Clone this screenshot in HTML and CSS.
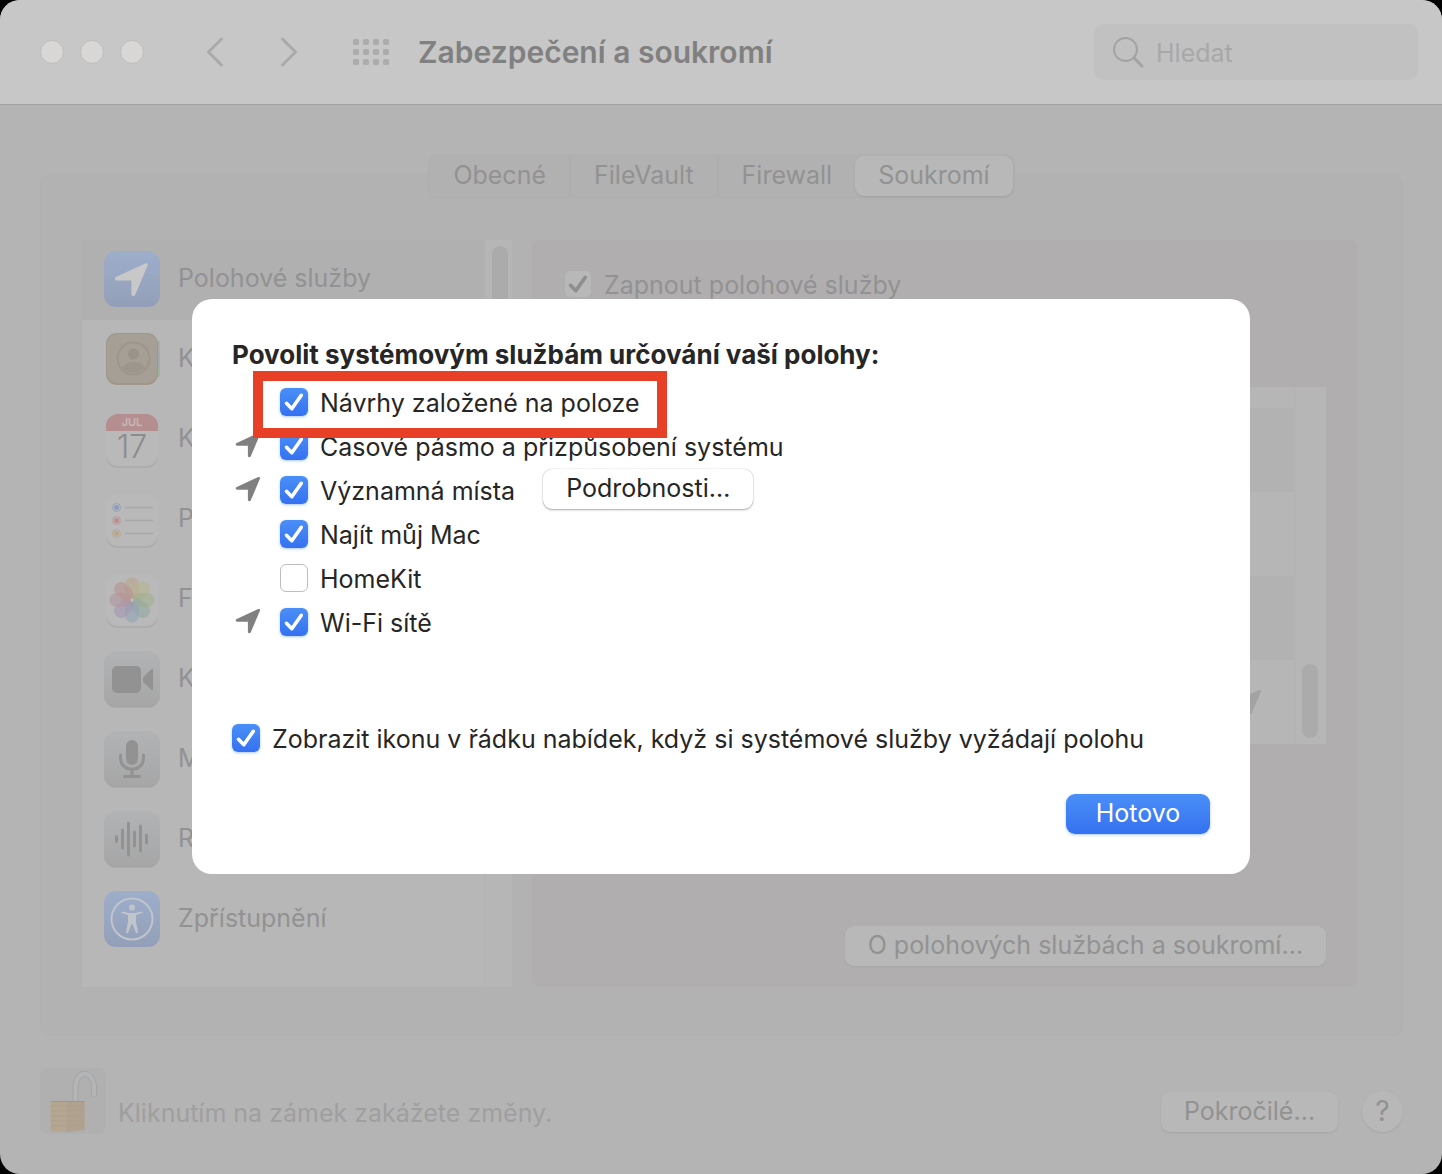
FILE: index.html
```html
<!DOCTYPE html>
<html lang="cs">
<head>
	<meta charset="utf-8">
	<meta name="viewport" content="width=device-width, initial-scale=1">
	<title>Zabezpečení a soukromí</title>
	<link rel="stylesheet" href="styles.css">
</head>
<body>
<!-- shared shapes -->
<svg class="defs" width="0" height="0" aria-hidden="true">
	<symbol id="arrow" viewBox="0 0 26 26"><path d="M1.700 10.900 23.200 1.100c1.500-.6 2.300.2 1.700 1.700L15.800 24.300c-.7 1.600-2.900 1.200-2.900-.5V13.800L2.400 13.700c-1.900 0-2.400-2.100-.7-2.800z"/></symbol>
	<symbol id="tick" viewBox="0 0 28 28"><path d="M6.500 15.300 11.800 20.700 21.300 7.300" fill="none" stroke="currentColor" stroke-width="3.600" stroke-linecap="round" stroke-linejoin="round"/></symbol>
</svg>

<div class="window">
	<header class="toolbar">
		<div class="lights"><span></span><span></span><span></span></div>
		<div class="nav">
			<button type="button" aria-label="Zpět"><svg width="18" height="30" viewBox="0 0 18 30"><path d="M15.500 2 2.500 15l13 13"/></svg></button>
			<button type="button" aria-label="Vpřed"><svg width="18" height="30" viewBox="0 0 18 30"><path d="M2.500 2l13 13-13 13"/></svg></button>
		</div>
		<button type="button" class="all" aria-label="Zobrazit vše">
			<svg width="36" height="26" viewBox="0 0 36 26">
				<g fill="#acacac">
					<rect x="0" y="0" width="6" height="6" rx="1.500"/><rect x="10" y="0" width="6" height="6" rx="1.500"/><rect x="20" y="0" width="6" height="6" rx="1.500"/><rect x="30" y="0" width="6" height="6" rx="1.500"/>
					<rect x="0" y="10" width="6" height="6" rx="1.500"/><rect x="10" y="10" width="6" height="6" rx="1.500"/><rect x="20" y="10" width="6" height="6" rx="1.500"/><rect x="30" y="10" width="6" height="6" rx="1.500"/>
					<rect x="0" y="20" width="6" height="6" rx="1.500"/><rect x="10" y="20" width="6" height="6" rx="1.500"/><rect x="20" y="20" width="6" height="6" rx="1.500"/><rect x="30" y="20" width="6" height="6" rx="1.500"/>
				</g>
			</svg>
		</button>
		<h1>Zabezpečení a soukromí</h1>
		<label class="search">
			<svg width="32" height="32" viewBox="0 0 32 32"><circle cx="13.500" cy="13.500" r="11.500"/><path d="M22 22l8 8" stroke-width="3"/></svg>
			<input type="text" placeholder="Hledat" aria-label="Hledat">
		</label>
	</header>

	<main class="content">
		<div class="tabs">
			<button type="button">Obecné</button>
			<button type="button">FileVault</button>
			<button type="button">Firewall</button>
			<button type="button" class="active">Soukromí</button>
		</div>

		<div class="group">
			<div class="sidebar">
				<ul class="services">
					<li class="selected">
						<svg class="icon" viewBox="0 0 56 56"><rect width="56" height="56" rx="12" fill="url(#blue)"/><svg x="10" y="11" width="35" height="35" fill="#c8c8c8"><use href="#arrow"/></svg>
							<defs><linearGradient id="blue" x2="0" y2="1"><stop offset="0" stop-color="#9daecb"/><stop offset="1" stop-color="#939fb8"/></linearGradient></defs></svg>
						<span>Polohové služby</span>
					</li>
					<li>
						<svg class="icon" viewBox="0 0 56 56"><path d="M50 10h6v12h-6z" fill="#aaa"/><path d="M50 22h6v12h-6z" fill="#9da9b3"/><path d="M50 34h6v12h-6z" fill="#9fb29f"/><rect x="2" y="2" width="52" height="52" rx="11" fill="#a0978a"/><rect x="3" y="3" width="50" height="49" rx="10" fill="#a69f95"/><circle cx="29.500" cy="27.500" r="16" fill="none" stroke="#9d968c" stroke-width="2"/><circle cx="29.500" cy="23" r="5.500" fill="#9a938a"/><path d="M18 37c4-8 19-8 23 0-6 6-17 6-23 0z" fill="#9d968c"/></svg>
						<span>Kontakty</span>
					</li>
					<li>
						<svg class="icon" viewBox="0 0 56 56"><rect x="2" y="4" width="52" height="53" rx="12" fill="#adadad"/><rect x="2" y="3" width="52" height="52" rx="12" fill="#b9b9b9"/><path d="M2 20v-5A12 12 0 0 1 14 3h28a12 12 0 0 1 12 12v5z" fill="#b58f90"/><text x="28" y="15" class="cal-month">JUL</text><text x="28" y="47" class="cal-day">17</text></svg>
						<span>Kalendáře</span>
					</li>
					<li>
						<svg class="icon" viewBox="0 0 56 56"><rect x="2" y="4" width="52" height="53" rx="12" fill="#adadad"/><rect x="2" y="3" width="52" height="52" rx="12" fill="#b9b9b9"/><g fill="none" stroke-width="1"><circle cx="12.500" cy="16.500" r="4" stroke="#93a0b8"/><circle cx="12.500" cy="29.500" r="4" stroke="#b89a9a"/><circle cx="12.500" cy="42.500" r="4" stroke="#b8a78f"/></g><circle cx="12.500" cy="16.500" r="2.500" fill="#8d9cb8"/><circle cx="12.500" cy="29.500" r="2.500" fill="#b68e8e"/><circle cx="12.500" cy="42.500" r="2.500" fill="#b9a587"/><path d="M21 16.500h28M21 29.500h28M21 42.500h28" stroke="#a9a9a9" stroke-width="1.500"/></svg>
						<span>Připomínky</span>
					</li>
					<li>
						<svg class="icon" viewBox="0 0 56 56"><rect x="2" y="4" width="52" height="53" rx="12" fill="#adadad"/><rect x="2" y="3" width="52" height="52" rx="12" fill="#b9b9b9"/><g fill-opacity=".65" transform="translate(0 1)"><rect x="21" y="5.500" width="14" height="22" rx="7" fill="#b9a68f"/><rect x="21" y="5.500" width="14" height="22" rx="7" fill="#b5b391" transform="rotate(45 28 28)"/><rect x="21" y="5.500" width="14" height="22" rx="7" fill="#a5af90" transform="rotate(90 28 28)"/><rect x="21" y="5.500" width="14" height="22" rx="7" fill="#94ab9e" transform="rotate(135 28 28)"/><rect x="21" y="5.500" width="14" height="22" rx="7" fill="#94a4b5" transform="rotate(180 28 28)"/><rect x="21" y="5.500" width="14" height="22" rx="7" fill="#a198b0" transform="rotate(225 28 28)"/><rect x="21" y="5.500" width="14" height="22" rx="7" fill="#b1969f" transform="rotate(270 28 28)"/><rect x="21" y="5.500" width="14" height="22" rx="7" fill="#b79590" transform="rotate(315 28 28)"/></g><circle cx="28" cy="29" r="1.500" fill="#c4c4c4"/></svg>
						<span>Fotky</span>
					</li>
					<li>
						<svg class="icon" viewBox="0 0 56 56"><rect y="1" width="56" height="56" rx="12" fill="#aaa"/><rect width="56" height="56" rx="12" fill="url(#grey)"/><rect x="8" y="15" width="29" height="27" rx="5" fill="#929292"/><path d="M39 26.500l8-8c1-1 2-.5 2 .8v18.400c0 1.300-1 1.800-2 .8l-8-7.500z" fill="#929292"/>
							<defs><linearGradient id="grey" x2="0" y2="1"><stop offset="0" stop-color="#b1b3b5"/><stop offset="1" stop-color="#a6a6a6"/></linearGradient></defs></svg>
						<span>Kamera</span>
					</li>
					<li>
						<svg class="icon" viewBox="0 0 56 56"><rect y="1" width="56" height="56" rx="12" fill="#aaa"/><rect width="56" height="56" rx="12" fill="url(#grey)"/><rect x="22" y="9" width="12" height="25" rx="6" fill="#929292"/><path d="M16.500 24v3c0 15 23 15 23 0v-3M28 38.500v7M20.500 45.500h15" fill="none" stroke="#929292" stroke-width="3" stroke-linecap="round"/></svg>
						<span>Mikrofon</span>
					</li>
					<li>
						<svg class="icon" viewBox="0 0 56 56"><rect y="1" width="56" height="56" rx="12" fill="#aaa"/><rect width="56" height="56" rx="12" fill="url(#grey)"/><path d="M12.500 25.500v5M18.500 19v18M24.500 12v32M30.500 21v14M36.500 15v25M42.500 24v8" stroke="#929292" stroke-width="3" stroke-linecap="round"/></svg>
						<span>Rozpoznávání řeči</span>
					</li>
					<li>
						<svg class="icon" viewBox="0 0 56 56"><rect width="56" height="56" rx="12" fill="url(#blue)"/><circle cx="28" cy="28" r="20.500" fill="none" stroke="#c0c4cb" stroke-width="2"/><circle cx="28" cy="16.500" r="3" fill="#c0c4cb"/><path d="M18.500 20.500l6.500 1.500h6l6.500-1.500c1.500 0 1.500 1.500.3 1.800L32 24v7l2 10c0 1.500-1.800 1.500-2.300.3L28.500 33h-1l-3.200 8.300c-.5 1.200-2.300 1.200-2.300-.3l2-10v-7l-5.800-1.700c-1.200-.3-1.200-1.800.3-1.800z" fill="#c0c4cb"/></svg>
						<span>Zpřístupnění</span>
					</li>
				</ul>
				<div class="scroll"><span></span></div>
			</div>

			<section class="detail">
				<label class="option">
					<span class="check muted"><input type="checkbox" checked><svg><use href="#tick"/></svg></span>
					<span>Zapnout polohové služby</span>
				</label>
				<div class="apps">
					<ul>
						<li></li>
						<li></li>
						<li></li>
						<li></li>
						<li><svg class="pointer"><use href="#arrow"/></svg></li>
					</ul>
					<div class="scroll"><span></span></div>
				</div>
				<button type="button" class="button">O polohových službách a soukromí…</button>
			</section>
		</div>
	</main>

	<footer class="bottom">
		<button type="button" class="lock" aria-label="Zámek">
			<svg width="66" height="66" viewBox="0 0 66 66">
				<path d="M35.500 33V20c0-19 18.500-19 18.500 0v8.500" fill="none" stroke="#a4a5a7" stroke-width="6"/>
				<path d="M35.500 33V20c0-19 18.500-19 18.500 0v8" fill="none" stroke="#b3b5b7" stroke-width="4"/>
				<path d="M10.500 33h34v29l-18 2-16-1z" fill="#b5a691"/>
				<path d="M26.500 34h18v28l-18 2z" fill="#b0a290"/>
				<path d="M11 38h33M11 43h33M11 48h33M11 53h33M11 58h33" stroke="#ad9f8b"/>
				<path d="M11 33.500h33" stroke="#a19788"/>
			</svg>
		</button>
		<p>Kliknutím na zámek zakážete změny.</p>
		<button type="button" class="button">Pokročilé…</button>
		<button type="button" class="help">?</button>
	</footer>

	<div class="overlay">
		<div class="sheet" role="dialog" aria-labelledby="sheet-title">
			<h2 id="sheet-title">Povolit systémovým službám určování vaší polohy:</h2>
			<ul class="options">
				<li class="marked">
					<span class="slot"></span>
					<label class="option"><span class="check"><input type="checkbox" checked><svg><use href="#tick"/></svg></span><span>Návrhy založené na poloze</span></label>
				</li>
				<li>
					<span class="slot"><svg class="pointer"><use href="#arrow"/></svg></span>
					<label class="option"><span class="check"><input type="checkbox" checked><svg><use href="#tick"/></svg></span><span>Časové pásmo a přizpůsobení systému</span></label>
				</li>
				<li>
					<span class="slot"><svg class="pointer"><use href="#arrow"/></svg></span>
					<label class="option"><span class="check"><input type="checkbox" checked><svg><use href="#tick"/></svg></span><span>Významná místa</span></label>
					<button type="button" class="button">Podrobnosti…</button>
				</li>
				<li>
					<span class="slot"></span>
					<label class="option"><span class="check"><input type="checkbox" checked><svg><use href="#tick"/></svg></span><span>Najít můj Mac</span></label>
				</li>
				<li>
					<span class="slot"></span>
					<label class="option"><span class="check"><input type="checkbox"><svg><use href="#tick"/></svg></span><span>HomeKit</span></label>
				</li>
				<li>
					<span class="slot"><svg class="pointer"><use href="#arrow"/></svg></span>
					<label class="option"><span class="check"><input type="checkbox" checked><svg><use href="#tick"/></svg></span><span>Wi-Fi sítě</span></label>
				</li>
			</ul>
			<label class="option menubar"><span class="check"><input type="checkbox" checked><svg><use href="#tick"/></svg></span><span>Zobrazit ikonu v řádku nabídek, když si systémové služby vyžádají polohu</span></label>
			<button type="button" class="button primary">Hotovo</button>
		</div>
	</div>
</div>
</body>
</html>
```
FILE: styles.css
```css
* { box-sizing: border-box; margin: 0; padding: 0; }
body { background: #000; font: 25px/32px Inter, "Liberation Sans", sans-serif; color: #929292; }
ul { list-style: none; }
button, input { font: inherit; color: inherit; border: 0; background: none; }
svg { display: block; flex: none; }
.defs { position: absolute; }

.window { position: relative; display: flex; flex-direction: column; min-height: 100vh; background: #b4b4b4; border-radius: 20px; overflow: hidden; }

/* toolbar */
.toolbar { display: flex; align-items: center; height: 105px; padding: 0 24px 0 40px; background: #c7c7c7; border-bottom: 1px solid #a2a2a2; }
.lights { display: flex; gap: 16px; }
.lights span { width: 24px; height: 24px; border: 1px solid #bdbcbc; border-radius: 50%; background: #d8d7d6; }
.nav { display: flex; gap: 56px; margin-left: 62px; }
.nav path { fill: none; stroke: #aaa; stroke-width: 3; stroke-linecap: round; stroke-linejoin: round; }
.all { margin-left: 55px; }
.toolbar h1 { margin-left: 29px; font-size: 30px; font-weight: 600; color: #808080; }
.search { display: flex; align-items: center; gap: 12px; width: 324px; height: 56px; margin-left: auto; padding: 0 18px; background: #c1c1c1; border-radius: 10px; }
.search svg { fill: none; stroke: #a3a3a3; stroke-width: 2; stroke-linecap: round; }
.search input { flex: 1; min-width: 0; padding-top: 2px; outline: 0; }
.search input::placeholder { color: #a8a8a8; opacity: 1; }

/* tabs and group box */
.content { flex: 1; display: flex; flex-direction: column; padding: 49px 39px 0 40px; }
.tabs { z-index: 1; align-self: center; display: flex; padding: 1px; background: #b1b1b1; border: 1px solid #afafaf; border-radius: 10px; }
.tabs button { height: 40px; padding: 0 23px 2px; }
.tabs button + button { border-left: 2px solid #adadad; }
.tabs .active { background: #b8b8b8; border-radius: 9px; box-shadow: 0 1px 2px #a0a0a0; }
.tabs button.active { border-left: 0; }
.group { flex: 1; display: flex; gap: 20px; margin-top: -24px; padding: 65px 44px 48px 41px; background: #b2b2b2; border: 1px solid #b0b0b0; border-radius: 10px; }

.sidebar { display: flex; width: 430px; background: #b7b7b7; }
.services { flex: 1; padding-bottom: 26px; }
.services li { display: flex; align-items: center; gap: 18px; height: 80px; padding: 0 22px 2px; white-space: nowrap; }
.services li span { padding-bottom: 2px; }
.services .selected { background: #b0b0b0; }
.icon { width: 56px; height: 56px; overflow: visible; }
.cal-month { font-size: 11px; font-weight: 600; text-anchor: middle; fill: #c6b9b9; }
.cal-day { font-size: 32px; font-weight: 300; text-anchor: middle; fill: #8c8c8c; }
.scroll { width: 28px; padding: 6px; background: #b6b6b6; border-left: 2px solid #b4b4b4; }
.scroll span { display: block; width: 16px; height: 160px; border-radius: 8px; background: #ababab; }

.detail { flex: 1; display: flex; flex-direction: column; padding: 29px 32px 21px; background: #b1aeaf; border-radius: 8px; }
.apps { display: flex; height: 357px; margin: 86px 0 auto; background: #b6b6b6; overflow: hidden; }
.apps ul { flex: 1; display: flex; flex-direction: column; justify-content: flex-end; }
.apps li { flex: none; display: flex; align-items: center; justify-content: flex-end; height: 84px; padding-right: 32px; }
.apps li:nth-child(even) { background: #b2b2b2; }
.apps .scroll { display: flex; align-items: flex-end; width: 32px; }
.apps .scroll span { height: 74px; }
.apps .pointer { fill: #a3a3a3; }
.detail > .button { align-self: flex-end; }

/* controls */
.option { display: flex; align-items: center; gap: 12px; }
.check { display: grid; flex: none; width: 28px; height: 28px; margin-bottom: 2px; }
.check input, .check svg { grid-area: 1 / 1; width: 28px; height: 28px; }
.check svg { color: #fff; pointer-events: none; visibility: hidden; }
.check input:checked + svg { visibility: visible; }
.check input { appearance: none; background: #fff; border: 1px solid #bdbdbd; border-radius: 6px; }
.check input:checked { border: 0; background: linear-gradient(#4a8ff8, #3571f0); box-shadow: 0 1px 3px #a9c8fb; }
.check.muted input:checked { background: #b8b8b8; border: 1px solid #aeaeae; box-shadow: none; }
.check.muted svg { color: #8e8e8e; }
.button { height: 40px; padding: 0 23px 2px; background: #b8b8b8; border-radius: 9px; box-shadow: 0 1px 2px #a5a5a5; white-space: nowrap; }
.pointer { width: 26px; height: 26px; fill: #808080; }

/* footer */
.bottom { display: flex; align-items: center; padding: 32px 39px 40px 40px; }
.lock { width: 66px; height: 66px; background: #b0b0b0; border-radius: 8px; }
.bottom p { margin: 24px auto 0 12px; color: #9f9f9f; }
.bottom .button { margin-top: 22px; }
.help { width: 41px; height: 41px; margin: 20px 0 0 24px; border-radius: 50%; background: #b8b8b8; box-shadow: 0 1px 2px #a5a5a5; font-size: 28px; }

/* sheet */
.overlay { position: absolute; inset: 0; z-index: 2; display: flex; align-items: flex-start; justify-content: center; padding: 299px 40px 40px; }
.sheet { display: flex; flex-direction: column; width: 1058px; padding: 40px; background: #fff; border-radius: 20px; color: #262626; }
.sheet h2 { font-size: 26px; font-weight: 700; }
.options { margin-top: 10px; }
.options li { position: relative; display: flex; align-items: center; height: 44px; }
.slot { width: 28px; margin-right: 20px; padding: 0 0 4px 3px; }
.options .button { align-self: flex-start; margin-left: 28px; }
.marked::after { content: ""; box-sizing: border-box; position: absolute; z-index: 1; top: -10px; left: 21px; width: 414px; height: 67px; border: 10px solid #e83f27; pointer-events: none; }
.menubar { height: 44px; margin-top: 72px; }
.sheet .button { background: #fff; box-shadow: 0 0 1px #aaa, 0 1px 2px #aaa; }
.sheet .primary { align-self: flex-end; width: 144px; margin-top: 33px; background: linear-gradient(#4a8ff8, #3571f0); color: #fff; box-shadow: 0 1px 3px #a9c8fb; }
```
